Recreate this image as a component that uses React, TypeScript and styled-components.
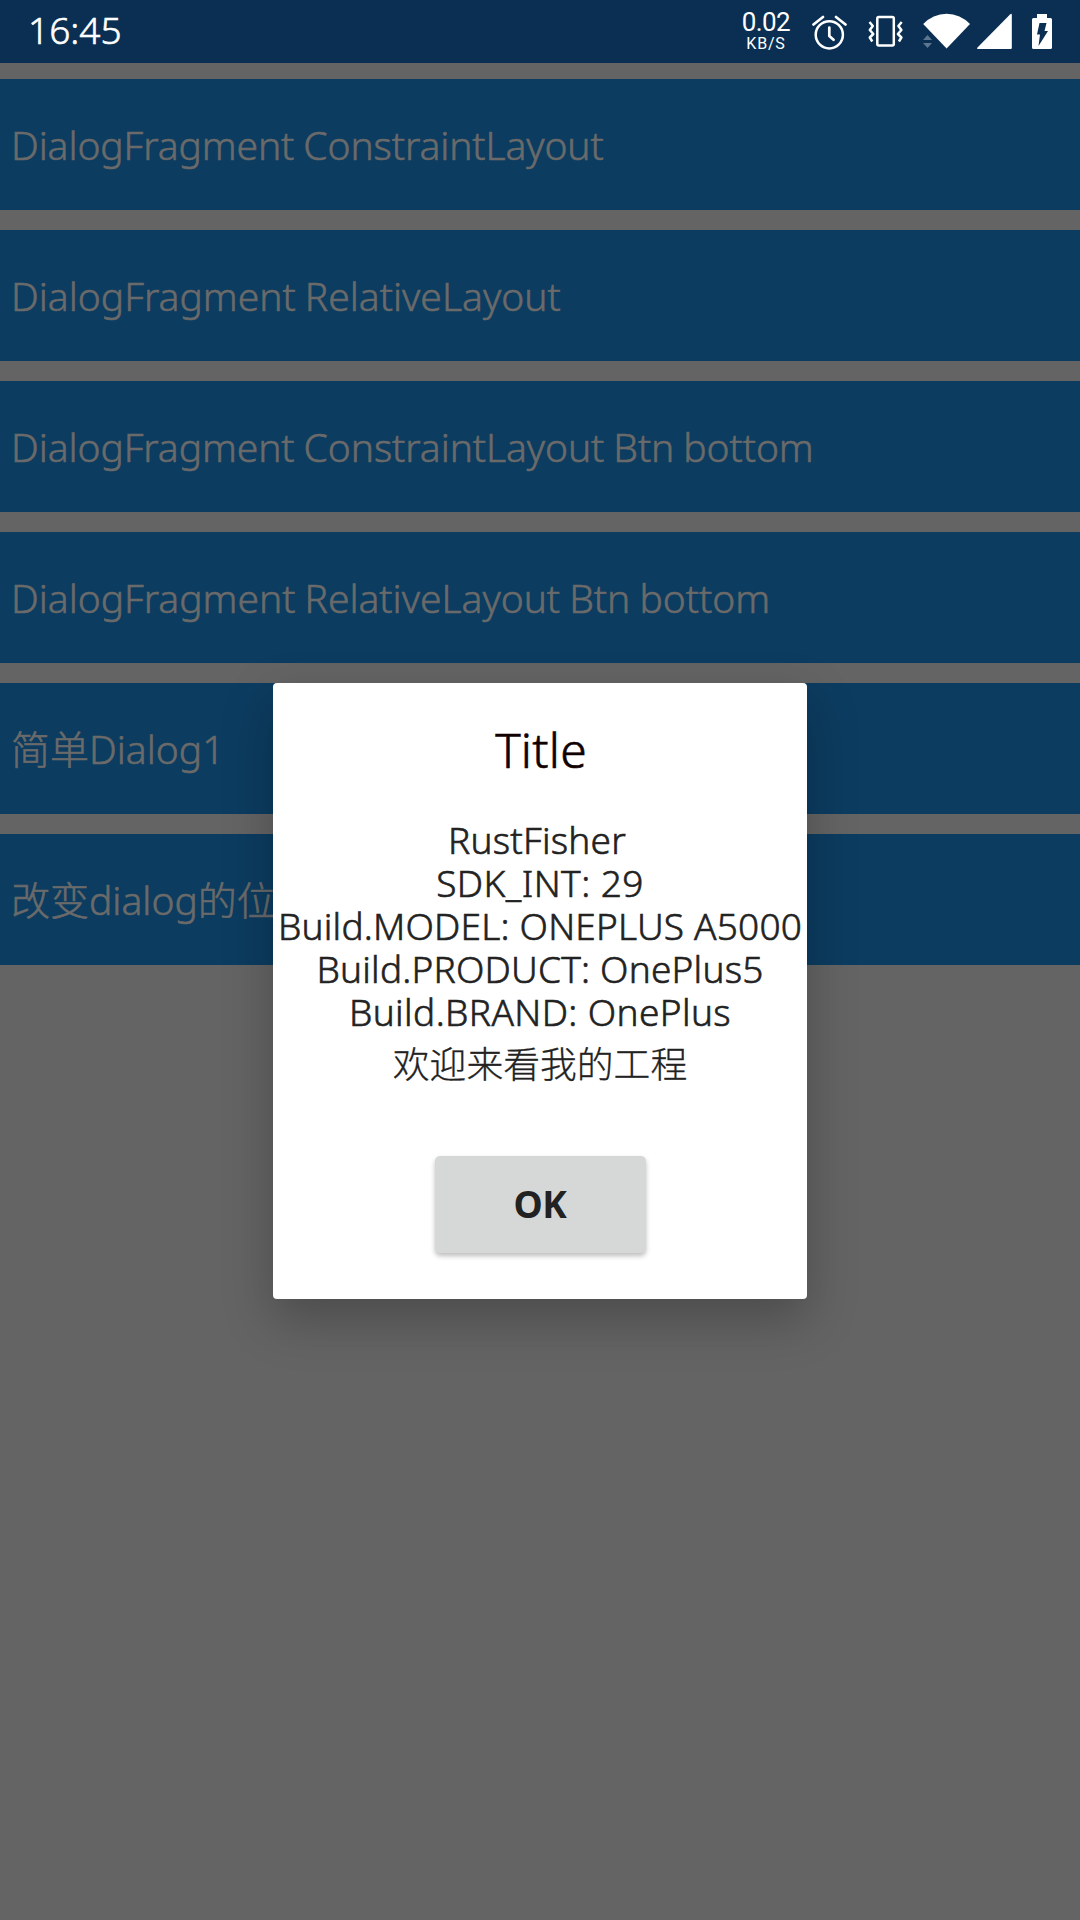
import React from 'react';
import styled, { createGlobalStyle } from 'styled-components';

const GlobalStyle = createGlobalStyle`
  * { box-sizing: border-box; }
  body { margin: 0; background: #646464; }
`;

const Screen = styled.div`
  position: relative;
  width: 1080px;
  height: 1920px;
  overflow: hidden;
  background: #646464;
  font-family: 'Noto Sans', 'Noto Sans CJK SC', sans-serif;
  font-weight: 300;
  -webkit-text-stroke: 0.6px currentColor;
`;

const StatusBar = styled.header`
  display: flex;
  align-items: center;
  height: 63px;
  padding: 0 28px;
  background: #0a2f53;
  color: #fff;
`;

const Clock = styled.time`
  flex: 1;
  height: 63px;
  font-size: 37px;
  line-height: 59px;
`;

const Speed = styled.div`
  display: flex;
  flex-direction: column;
  align-items: center;
  width: 52px;
  height: 63px;
  margin-right: 2px;
  padding-top: 7px;
  font-family: Roboto, sans-serif;
  font-weight: 400;
  white-space: nowrap;
  -webkit-text-stroke: 0;
`;

const SpeedValue = styled.span`
  font-size: 26px;
  line-height: 30px;
  letter-spacing: -0.6px;
`;

const SpeedUnit = styled.span`
  margin-top: -1px;
  font-size: 16px;
  line-height: 16px;
  letter-spacing: 0.8px;
`;

const Icon = styled.svg<{ $gap: number }>`
  flex: none;
  height: 63px;
  margin-left: ${(p) => p.$gap}px;
`;

const List = styled.main`
  display: flex;
  flex-direction: column;
  gap: 20px;
  padding-top: 16px;
`;

const Row = styled.div<{ $tracking: number }>`
  height: 131px;
  padding-left: 11px;
  background: #0c3c60;
  color: #6a6a6a;
  font-size: 39px;
  line-height: 132px;
  letter-spacing: ${(p) => p.$tracking}px;
  word-spacing: -1px;
  white-space: nowrap;
`;

const Dialog = styled.section`
  position: absolute;
  top: 683px;
  left: 273px;
  display: flex;
  flex-direction: column;
  align-items: center;
  width: 534px;
  height: 616px;
  padding-top: 35px;
  border-radius: 4px;
  background: #fff;
  box-shadow: 0 20px 50px rgba(0, 0, 0, 0.25);
`;

const Title = styled.h1`
  margin: 0 0 36px;
  padding-left: 2px;
  color: #100000;
  font-size: 48px;
  font-weight: inherit;
  letter-spacing: 0.2px;
  line-height: 64px;
`;

const Message = styled.div`
  color: #222;
  font-size: 37px;
  text-align: center;
  white-space: nowrap;
`;

const Line = styled.div<{ $tracking: number; $trailing?: number }>`
  padding-right: ${(p) => p.$trailing ?? 0}px;
  letter-spacing: ${(p) => p.$tracking}px;
  line-height: 43px;
`;

const Greeting = styled.div`
  font-size: 36.8px;
  line-height: 63px;
  -webkit-text-stroke: 0.3px currentColor;
`;

const Button = styled.button`
  width: 211px;
  height: 97px;
  margin-top: 60px;
  padding: 0 0 2px;
  border: 0;
  border-radius: 5px;
  background: #d6d8d7;
  box-shadow: 0 3px 5px rgba(0, 0, 0, 0.26);
  color: #222;
  font: 700 37px 'Noto Sans', sans-serif;
  letter-spacing: -0.5px;
  -webkit-text-stroke: 0;
`;

const rows = [
  { text: 'DialogFragment ConstraintLayout', tracking: -0.1 },
  { text: 'DialogFragment RelativeLayout', tracking: 0 },
  { text: 'DialogFragment ConstraintLayout Btn bottom', tracking: -0.08 },
  { text: 'DialogFragment RelativeLayout Btn bottom', tracking: -0.02 },
  { text: '简单Dialog1', tracking: 0 },
  { text: '改变dialog的位置', tracking: 0 },
];

const lines = [
  { text: 'RustFisher', tracking: 0.2, trailing: 6 },
  { text: 'SDK_INT: 29', tracking: 0.45 },
  { text: 'Build.MODEL: ONEPLUS A5000', tracking: 0.2 },
  { text: 'Build.PRODUCT: OnePlus5', tracking: 0.2 },
  { text: 'Build.BRAND: OnePlus', tracking: 0.38 },
];

export default function App() {
  return (
    <Screen>
      <GlobalStyle />
      <StatusBar>
        <Clock>16:45</Clock>
        <Speed>
          <SpeedValue>0.02</SpeedValue>
          <SpeedUnit>KB/S</SpeedUnit>
        </Speed>
        <Icon $gap={18} width="36" viewBox="812 0 36 63" fill="none" stroke="#fff" strokeWidth="2.5">
          <circle cx="829.3" cy="34.8" r="13.6" />
          <path strokeWidth="2.7" strokeLinecap="round" strokeLinejoin="round" d="M829.3 27.500v8.500l4.200 3.800M813.500 24.500l9.500-7.500M845.500 24.500l-9.500-7.500" />
        </Icon>
        <Icon $gap={20} width="36" viewBox="868 0 36 63" fill="none" stroke="#fff" strokeWidth="2.5">
          <rect x="877.300" y="17" width="16.500" height="28.500" rx="1.5" />
          <path strokeLinejoin="round" d="M869.500 22l3.300 4-3 4 3.500 4-3.500 3.500 2.500 4M901.700 22l-3.300 4 3 4-3.500 4 3.500 3.500-2.500 4" />
        </Icon>
        <Icon $gap={18} width="49" viewBox="922 0 49 63">
          <path fill="#fff" d="M923.200 24a32 32 0 0 1 46.800 0L946.600 48.500z" />
          <path fill="#5d7690" d="M923 40l4.500-5 4.500 5zM923 43h9l-4.500 5z" />
        </Icon>
        <Icon $gap={5} width="36" viewBox="976 0 36 63">
          <path fill="#fff" d="M1011.800 15v33q0 1-1 1H978q-1.800 0-.5-1.400L1010 14.500q1.800-1.500 1.800.5z" />
        </Icon>
        <Icon $gap={20} width="20" viewBox="1032 0 20 63">
          <path fill="#fff" d="M1037 14h10v4h3.500q1.500 0 1.500 1.500v28q0 1.500-1.500 1.500h-17q-1.500 0-1.500-1.500v-28q0-1.500 1.500-1.500h3.500z" />
          <path fill="#0a2f53" d="M1039.500 23h7l-2 8h3.500l-9.500 15 1.500-11.500h-3z" />
        </Icon>
      </StatusBar>
      <List>
        {rows.map((row) => (
          <Row key={row.text} $tracking={row.tracking}>
            {row.text}
          </Row>
        ))}
      </List>
      <Dialog>
        <Title>Title</Title>
        <Message>
          {lines.map((line) => (
            <Line key={line.text} $tracking={line.tracking} $trailing={line.trailing}>
              {line.text}
            </Line>
          ))}
          <Greeting>欢迎来看我的工程</Greeting>
        </Message>
        <Button>OK</Button>
      </Dialog>
    </Screen>
  );
}
